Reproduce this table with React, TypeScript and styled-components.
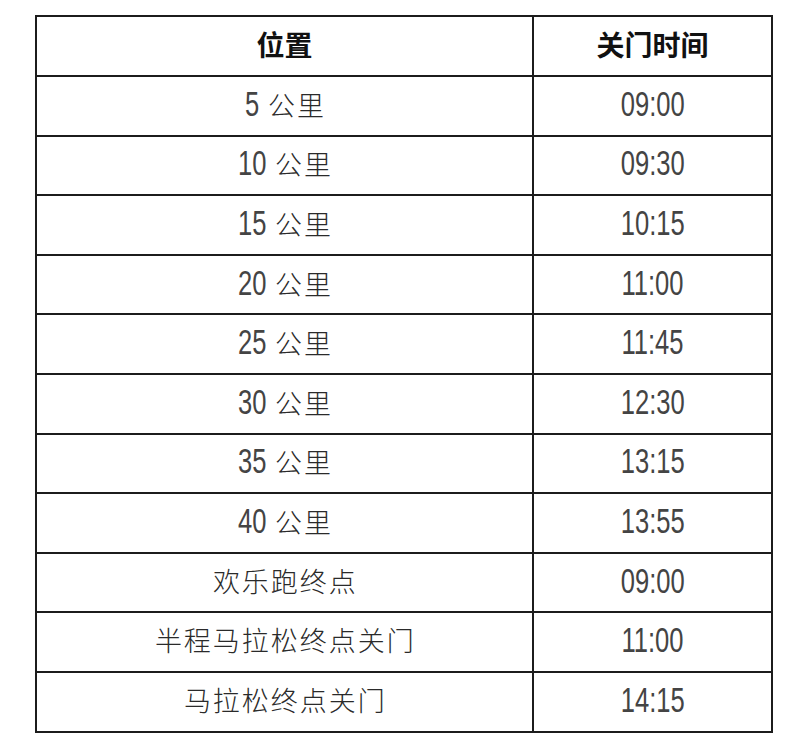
import styled, { createGlobalStyle } from "styled-components";

const rows: [string, string, string][] = [
  ["5", "公里", "09:00"],
  ["10", "公里", "09:30"],
  ["15", "公里", "10:15"],
  ["20", "公里", "11:00"],
  ["25", "公里", "11:45"],
  ["30", "公里", "12:30"],
  ["35", "公里", "13:15"],
  ["40", "公里", "13:55"],
  ["", "欢乐跑终点", "09:00"],
  ["", "半程马拉松终点关门", "11:00"],
  ["", "马拉松终点关门", "14:15"],
];

function App() {
  return (
    <>
      <GlobalStyle />
      <Page>
        <Table>
          <thead>
            <tr>
              <HeadCell $wide>位置</HeadCell>
              <HeadCell>关门时间</HeadCell>
            </tr>
          </thead>
          <tbody>
            {rows.map(([num, label, time], i) => (
              <tr key={i}>
                <Cell>
                  {num && <Km $digits={num.length}>{num}</Km>}
                  <Label $spaced={!!num}>{label}</Label>
                </Cell>
                <Cell>
                  <Time>{time}</Time>
                </Cell>
              </tr>
            ))}
          </tbody>
        </Table>
      </Page>
    </>
  );
}

export default App;

const GlobalStyle = createGlobalStyle`
  body {
    margin: 0;
    background: #ffffff;
    font-family: "Noto Sans CJK SC", "Liberation Sans", sans-serif;
  }
`;

const Page = styled.div`
  padding: 15px 0 0 35px;
`;

const Table = styled.table`
  width: 738px;
  border-collapse: collapse;
  border: 2px solid #1c1c1c;
`;

const HeadCell = styled.th<{ $wide?: boolean }>`
  width: ${(p) => (p.$wide ? "498px" : "240px")};
  height: 60px;
  padding: 0 0 5px;
  box-sizing: border-box;
  border: 2px solid #1c1c1c;
  font-family: "Noto Sans CJK SC", sans-serif;
  font-size: 28px;
  font-weight: 700;
  line-height: 1;
  color: #111;
  text-align: center;
  vertical-align: middle;
`;

const Cell = styled.td`
  height: 59.6px;
  padding: 0 0 5px;
  box-sizing: border-box;
  border: 2px solid #1c1c1c;
  text-align: center;
  vertical-align: middle;
  line-height: 1;
  white-space: nowrap;
`;

const Label = styled.span<{ $spaced?: boolean }>`
  margin-left: ${(p) => (p.$spaced ? "9px" : "0")};
  font-family: "Noto Sans CJK SC", sans-serif;
  font-size: 27px;
  font-weight: 300;
  letter-spacing: 2px;
  margin-right: -2px;
  color: #2a2a2a;
`;

const Time = styled.span`
  display: inline-block;
  font-family: "Liberation Sans", Arial, sans-serif;
  font-size: 35px;
  line-height: 1;
  transform: scaleX(0.73);
  color: #444;
`;

const Km = styled(Time)<{ $digits: number }>`
  transform-origin: left center;
  margin-right: ${(p) => -(1 - 0.73) * 0.556 * 35 * p.$digits}px;
`;
